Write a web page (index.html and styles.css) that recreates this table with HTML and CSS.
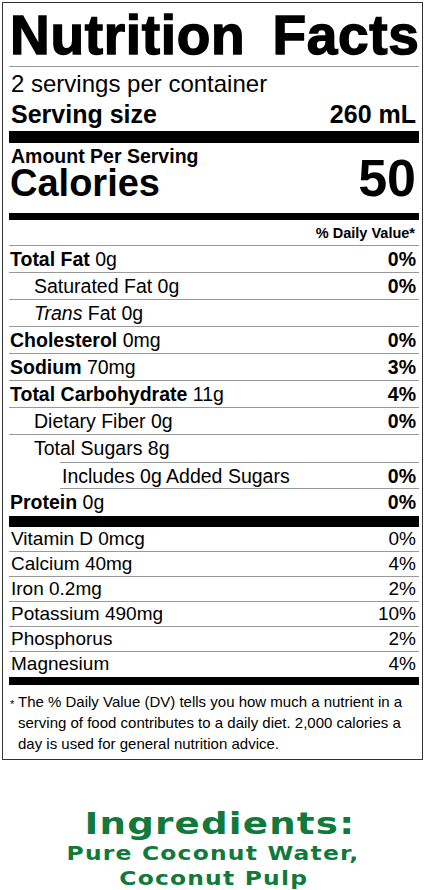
FILE: index.html
```html
<!DOCTYPE html>
<html lang="en">
<head>
<meta charset="utf-8">
<title>Nutrition Facts</title>
<link rel="stylesheet" href="styles.css">
</head>
<body>
<div class="label">
  <div class="title">Nutrition Facts</div>
  <div class="servings">2 servings per container</div>
  <div class="serving-size"><span>Serving size</span><span>260 mL</span></div>
  <div class="bar bar-xl"></div>
  <div class="amount">Amount Per Serving</div>
  <div class="calories"><span class="cal-label">Calories</span><span class="cal-value">50</span></div>
  <div class="bar bar-md"></div>
  <div class="dv-head">% Daily Value*</div>
  <div class="row"><span><b>Total Fat</b> 0g</span><b>0%</b></div>
  <div class="row ind1"><span>Saturated Fat 0g</span><b>0%</b></div>
  <div class="row ind1"><span><i>Trans</i> Fat 0g</span></div>
  <div class="row"><span><b>Cholesterol</b> 0mg</span><b>0%</b></div>
  <div class="row"><span><b>Sodium</b> 70mg</span><b>3%</b></div>
  <div class="row"><span><b>Total Carbohydrate</b> 11g</span><b>4%</b></div>
  <div class="row ind1"><span>Dietary Fiber 0g</span><b>0%</b></div>
  <div class="row ind1 no-line"><span>Total Sugars 8g</span></div>
  <div class="row ind2"><span>Includes 0g Added Sugars</span><b>0%</b></div>
  <div class="row no-line"><span><b>Protein</b> 0g</span><b>0%</b></div>
  <div class="bar bar-lg"></div>
  <div class="vrow"><span>Vitamin D 0mcg</span><span>0%</span></div>
  <div class="vrow"><span>Calcium 40mg</span><span>4%</span></div>
  <div class="vrow"><span>Iron 0.2mg</span><span>2%</span></div>
  <div class="vrow"><span>Potassium 490mg</span><span>10%</span></div>
  <div class="vrow"><span>Phosphorus</span><span>2%</span></div>
  <div class="vrow no-line"><span>Magnesium</span><span>4%</span></div>
  <div class="bar bar-sm"></div>
  <div class="foot"><span class="ast">*</span><p>The % Daily Value (DV) tells you how much a nutrient in a<br>serving of food contributes to a daily diet. 2,000 calories a<br>day is used for general nutrition advice.</p></div>
</div>
<div class="ingredients">
  <div class="ing-title"><span>Ingredients:</span></div>
  <div class="ing-line"><span>Pure Coconut Water,</span></div>
  <div class="ing-line"><span>Coconut Pulp</span></div>
</div>
</body>
</html>
```
FILE: styles.css
```css
* { box-sizing: content-box; }
html, body { margin: 0; padding: 0; background: #fff; }
body {
  font-family: "Liberation Sans", Arial, Helvetica, sans-serif;
  color: #000;
  width: 427px;
  height: 890px;
  overflow: hidden;
}
.label {
  margin: 2px 0 0 2px;
  width: 410px;
  border: 1px solid #333;
  padding: 0 3px 0 6px;
}
.title {
  font-weight: bold;
  font-size: 55px;
  line-height: 61px;
  padding-top: 2px;
  letter-spacing: 0.7px;
  word-spacing: 11px;
  -webkit-text-stroke: 1.4px #000;
  white-space: nowrap;
  padding-left: 1px;
  border-bottom: 1px solid #999;
}
.servings {
  font-size: 24px;
  line-height: 30px;
  padding: 2px 0 0 2px;
}
.serving-size {
  display: flex;
  justify-content: space-between;
  font-size: 25px;
  font-weight: bold;
  line-height: 30px;
  padding: 0 3px 0 2px;
  margin-bottom: 2px;
}
.bar { background: #000; }
.bar-xl { height: 12px; }
.bar-lg { height: 11px; }
.bar-md { height: 7px; }
.bar-sm { height: 8px; }
.amount {
  font-size: 19.5px;
  font-weight: bold;
  line-height: 21px;
  padding: 3px 0 0 2px;
}
.calories {
  display: flex;
  justify-content: space-between;
  align-items: baseline;
  height: 46px;
  line-height: 23px;
  font-weight: bold;
  padding: 0 3px 0 1px;
}
.cal-label { font-size: 38px; }
.cal-value { font-size: 52px; }
.dv-head {
  text-align: right;
  font-size: 14.5px;
  font-weight: bold;
  line-height: 24px;
  padding: 1px 4px 0 0;
  border-bottom: 1px solid #999;
}
.row {
  display: flex;
  justify-content: space-between;
  font-size: 19.5px;
  height: 25px;
  line-height: 25px;
  padding: 1px 3px 0 1px;
  border-bottom: 1px solid #999;
  white-space: nowrap;
}
.row.ind1 { padding-left: 25px; }
.row.ind2 {
  margin-left: 51px;
  padding-left: 2px;
  border-top: 1px solid #999;
  height: 24px;
}
.row.no-line { border-bottom: none; height: 26px; }
.vrow {
  display: flex;
  justify-content: space-between;
  font-size: 19px;
  height: 24px;
  line-height: 24px;
  padding: 0 3px 0 2px;
  border-bottom: 1px solid #999;
}
.vrow.no-line { border-bottom: none; height: 25px; }
.foot {
  display: flex;
  padding: 6px 0 5px 1px;
}
.ast {
  font-size: 11px;
  line-height: 11px;
  padding-top: 8px;
  width: 8px;
  flex: none;
}
.foot p {
  margin: 0;
  font-size: 15px;
  line-height: 21px;
  white-space: nowrap;
}
.ingredients {
  margin-top: 45px;
  color: #0f7a3b;
  font-family: "DejaVu Sans", Verdana, sans-serif;
  font-weight: bold;
  text-align: center;
}
.ingredients span {
  display: inline-block;
  transform: scaleX(1.2);
  letter-spacing: 1px;
}
.ing-title {
  font-size: 31px;
  line-height: 36px;
  padding-left: 12px;
}
.ing-line {
  font-size: 19.5px;
  line-height: 25px;
}
```
